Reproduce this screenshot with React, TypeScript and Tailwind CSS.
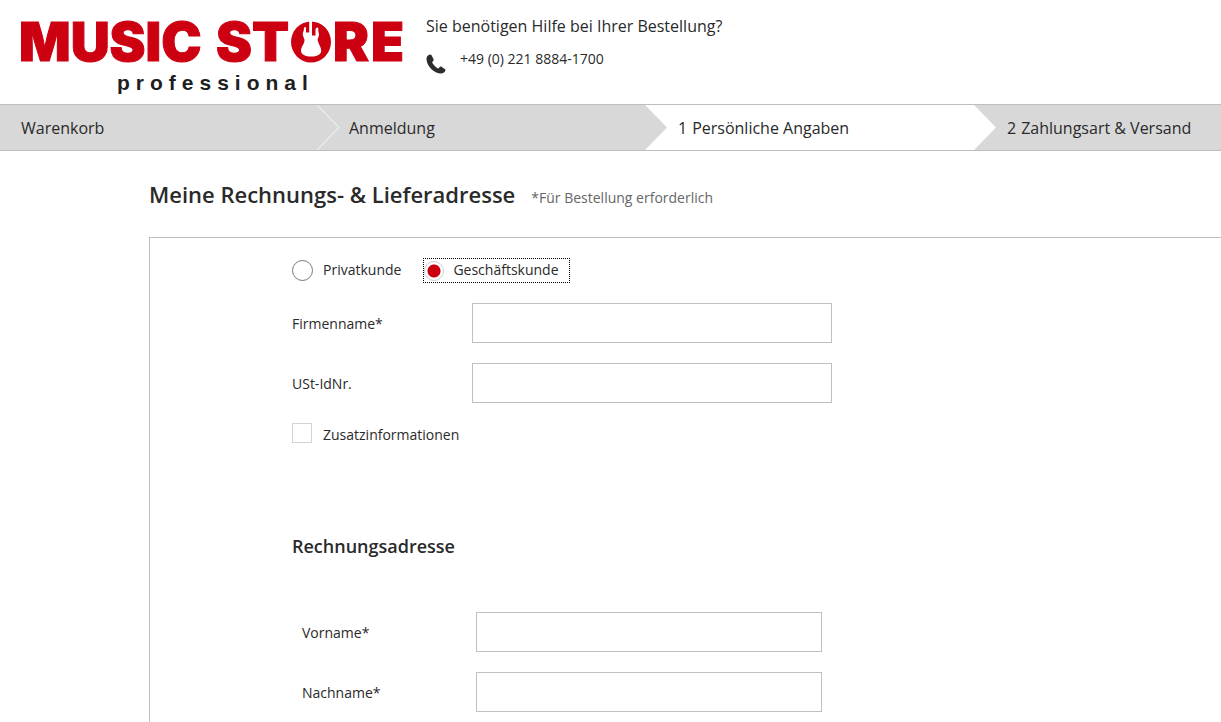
import { useState } from 'react'

interface FieldProps {
  id: string
  label: string
  inset?: boolean
}

const RADIO =
  'size-[21px] shrink-0 appearance-none rounded-full border border-[#777777] bg-white outline-none checked:size-5 checked:border-[#d0d0d0] checked:bg-[radial-gradient(circle,#cc0010_6px,transparent_7px)]'

function Logo() {
  return (
    <a href="#" aria-label="Music Store professional" className="block w-[400px] shrink-0">
      <svg viewBox="0 0 400 100" className="block w-full">
        <g fill="#cc0010" stroke="#cc0010" strokeWidth="1" fontFamily="Inter, sans-serif" fontWeight="900" fontSize="54">
          <text x="3" y="61">MUSIC</text>
          <text x="200" y="61">ST</text>
          <text x="317" y="61">R</text>
          <text x="355" y="61">E</text>
        </g>
        <ellipse cx="295" cy="42" rx="20" ry="20.500" fill="#cc0010" />
        <path
          fill="#ffffff"
          d="M293.200 21H296v14.500h3.500v-5.500c0-1.500.8-2.500 1.800-2.500s1.200 1 1 2.200c-.2 1.800.7 3 .7 4.800 0 2.800-1.800 4-1.200 6.500.7 3.200 3.400 6 3.400 9.500 0 4-4.200 6-10 6s-10.200-2-10.200-6c0-3.500 2.900-6.200 3.500-9.500.5-2.600-1.800-4-1.800-6.700 0-2.300 1.200-3 1.200-5.300-.1-1.300.3-2 1.100-2s1 .8 1 1.800v3.700h3.200z"
        />
        <text x="101" y="90" fill="#1e1e1e" fontFamily="'Liberation Sans', sans-serif" fontWeight="700" fontSize="21" letterSpacing="6">
          professional
        </text>
      </svg>
    </a>
  )
}

function PhoneIcon() {
  return (
    <svg viewBox="0 0 20 20" className="mt-[5px] size-5 shrink-0" fill="#2d2d2d" aria-hidden="true">
      <path d="M4.200.5C2 .8.300 2.600.5 5.200.9 12.300 8 19.300 15 19.500c2.300 0 4-1.400 4.500-3.200.1-.5 0-.8-.4-1.100l-3.600-2.500c-.5-.3-1-.3-1.400.1l-1.300 1.300c-.4.300-.8.400-1.200.1-2-1.200-3.900-3.100-5.200-5.200-.3-.5-.2-.9.200-1.200L7.400 6.600c.4-.3.400-.8.200-1.300L5.400 1.100C5.100.7 4.700.4 4.200.5z" />
    </svg>
  )
}

function Chevron({ fill, stroke }: { fill: string; stroke?: string }) {
  return (
    <svg viewBox="0 0 23 45" className="absolute top-0 left-0 h-full w-[23px]" aria-hidden="true">
      <path d="M0 0L22 22.500L0 45" fill={fill} stroke={stroke ?? 'none'} strokeWidth="1.500" />
    </svg>
  )
}

function Steps() {
  return (
    <nav aria-label="Bestellschritte" className="border-y border-[#bebebe] bg-[#d8d8d8]">
      <ol className="grid h-[45px] grid-cols-[317fr_328fr_329fr_247fr] text-base whitespace-nowrap">
        <li className="flex items-center pl-[21px]">
          <a href="#">Warenkorb</a>
        </li>
        <li className="relative flex items-center pl-8">
          <Chevron fill="#d8d8d8" stroke="#ebebeb" />
          <a href="#">Anmeldung</a>
        </li>
        <li aria-current="step" className="relative flex items-center gap-[5px] bg-white pl-[33px]">
          <Chevron fill="#d8d8d8" />
          <span>1</span>
          <span>Persönliche Angaben</span>
        </li>
        <li className="relative flex items-center gap-[5px] pl-[33px]">
          <Chevron fill="#ffffff" />
          <span>2</span>
          <span>Zahlungsart &amp; Versand</span>
        </li>
      </ol>
    </nav>
  )
}

function Field({ id, label, inset }: FieldProps) {
  return (
    <div className={inset ? 'flex items-center pl-[10px]' : 'flex items-center'}>
      <label htmlFor={id} className={inset ? 'w-[174px] shrink-0 pt-0.5' : 'w-[180px] shrink-0 pt-0.5'}>
        {label}
      </label>
      <input
        id={id}
        name={id}
        type="text"
        className={`h-10 border border-[#c0c0c0] bg-white px-3 ${inset ? 'w-[346px]' : 'w-[360px]'}`}
      />
    </div>
  )
}

export default function App() {
  const [customer, setCustomer] = useState('business')
  const [extra, setExtra] = useState(false)

  return (
    <div className="overflow-x-hidden bg-white font-['Open_Sans',sans-serif] text-sm text-[#2a2a2a]">
      <header className="flex h-[104px] items-start pl-4">
        <Logo />
        <div className="pt-[14px] pl-[10px]">
          <p className="text-base">Sie benötigen Hilfe bei Ihrer Bestellung?</p>
          <div className="mt-[11px] flex items-start gap-[14px]">
            <PhoneIcon />
            <a href="tel:+4922188841700">+49 (0) 221 8884-1700</a>
          </div>
        </div>
      </header>

      <Steps />

      <main className="pl-[149px]">
        <div className="flex h-[86px] items-baseline gap-4 pt-[27px]">
          <h1 className="text-[22px] leading-8 font-semibold">Meine Rechnungs- &amp; Lieferadresse</h1>
          <p className="text-[#666666]">*Für Bestellung erforderlich</p>
        </div>

        <form className="border-t border-l border-[#c0c0c0] pt-5 pb-[10px] pl-[142px]">
          <div className="flex h-[25px] items-center gap-[22px]">
            <label className="flex items-center gap-[10px]">
              <input
                type="radio"
                name="customer"
                checked={customer === 'private'}
                onChange={() => setCustomer('private')}
                className={RADIO}
              />
              <span className="pb-0.5">Privatkunde</span>
            </label>
            <label className="flex h-[25px] items-center gap-[9px] border border-dotted border-black pr-[10px]">
              <input
                type="radio"
                name="customer"
                checked={customer === 'business'}
                onChange={() => setCustomer('business')}
                className={RADIO}
              />
              <span className="pb-0.5">Geschäftskunde</span>
            </label>
          </div>

          <div className="mt-5 flex flex-col gap-5">
            <Field id="company" label="Firmenname*" />
            <Field id="vat" label="USt-IdNr." />
            <label className="flex h-5 items-center gap-[11px] self-start">
              <input
                type="checkbox"
                checked={extra}
                onChange={e => setExtra(e.target.checked)}
                className="size-5 appearance-none border border-[#d0d5d5] bg-white checked:bg-[#cc0010]"
              />
              <span className="pt-[3px]">Zusatzinformationen</span>
            </label>
          </div>

          <h2 className="mt-[89px] text-lg leading-7 font-semibold">Rechnungsadresse</h2>
          <div className="mt-[52px] flex flex-col gap-5">
            <Field id="firstname" label="Vorname*" inset />
            <Field id="lastname" label="Nachname*" inset />
          </div>
        </form>
      </main>
    </div>
  )
}
